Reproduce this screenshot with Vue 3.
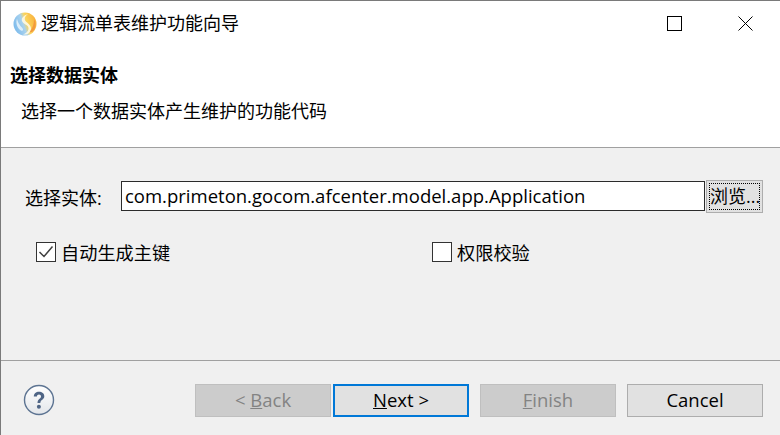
<script setup>
const autoKey = true
</script>

<template>
  <div class="window">
    <div class="titlebar">
      <svg class="logo" width="24" height="24" viewBox="0 0 24 24">
        <defs>
          <linearGradient id="lg" x1="0.05" y1="0.65" x2="0.95" y2="0.35">
            <stop offset="0" stop-color="#7fbcec" />
            <stop offset="0.42" stop-color="#a9d2ee" />
            <stop offset="0.6" stop-color="#fbd65f" />
            <stop offset="1" stop-color="#f9b43f" />
          </linearGradient>
        </defs>
        <circle cx="12" cy="12" r="11.5" fill="url(#lg)" />
        <path d="M15 2C10 3.500 7.500 7 9.500 10C11.500 12.800 16 13 15.500 17C15.200 19.500 13 21.500 10 22.500C14.500 23.200 18 20.500 18 16.500C18 12 12.500 10.800 11.800 7.500C11.400 5.500 12.800 3.300 15 2Z" fill="#fff9e6" opacity="0.9" />
        <path d="M4 6.500C2.500 11 4 16 8 18.500C9.800 19.500 10.800 18 9.500 16.300C7.500 13.800 5 11.500 4 6.500Z" fill="#e9f4fb" opacity="0.85" />
        <path d="M21.500 17.500C23 14.500 23 10 21 7C21.300 11 20 15.500 16.500 20.500C18.500 20.500 20.300 19.300 21.500 17.500Z" fill="#f29a3d" />
      </svg>
      <span class="title">逻辑流单表维护功能向导</span>
      <div class="controls">
        <svg width="15" height="15" viewBox="0 0 15 15">
          <rect x="0.5" y="0.5" width="14" height="14" fill="none" stroke="#000" />
        </svg>
        <svg width="15" height="15" viewBox="0 0 15 15">
          <path d="M0.500 0.500L14.500 14.500M14.500 0.500L0.500 14.500" fill="none" stroke="#000" stroke-width="1" />
        </svg>
      </div>
    </div>

    <div class="banner">
      <h1 class="heading">选择数据实体</h1>
      <p class="desc">选择一个数据实体产生维护的功能代码</p>
    </div>

    <div class="body">
      <div class="entity-row">
        <label class="entity-label">选择实体:</label>
        <div class="entity-input">com.primeton.gocom.afcenter.model.app.Application</div>
        <button class="browse"><span class="browse-focus">浏览...</span></button>
      </div>
      <div class="checks">
        <div class="check">
          <span class="box">
            <svg v-if="autoKey" width="18" height="18" viewBox="0 0 18 18">
              <path d="M2.500 9L7 13.500L15.500 3.500" fill="none" stroke="#404040" stroke-width="1.500" />
            </svg>
          </span>
          <span class="check-text">自动生成主键</span>
        </div>
        <div class="check">
          <span class="box"></span>
          <span class="check-text">权限校验</span>
        </div>
      </div>
    </div>

    <div class="footer">
      <svg class="help" width="32" height="32" viewBox="0 0 32 32">
        <defs>
          <linearGradient id="hg" x1="0" y1="0" x2="0" y2="1">
            <stop offset="0" stop-color="#ffffff" />
            <stop offset="1" stop-color="#e3e6ea" />
          </linearGradient>
        </defs>
        <circle cx="16" cy="16" r="14.500" fill="url(#hg)" stroke="#5d7492" stroke-width="1.400" />
        <path d="M10.800 12.500C10.800 9.500 13 7.800 16 7.800C19 7.800 21.300 9.500 21.300 12.200C21.300 15.800 17.300 15.500 17.300 19H14.500C14.500 14.700 18 14.800 18 12.400C18 11.100 17.200 10.400 16 10.400C14.700 10.400 14 11.300 13.900 12.500Z" fill="#4f6586" />
        <circle cx="15.900" cy="22.800" r="2" fill="#4f6586" />
      </svg>
      <div class="buttons">
        <button class="btn disabled">&lt; <u>B</u>ack</button>
        <button class="btn primary"><u>N</u>ext &gt;</button>
        <button class="btn disabled finish"><u>F</u>inish</button>
        <button class="btn cancel">Cancel</button>
      </div>
    </div>
  </div>
</template>

<style>
html, body {
  margin: 0;
  background: #f0f0f0;
}
</style>

<style scoped>
.window {
  width: 780px;
  height: 435px;
  box-sizing: border-box;
  display: flex;
  flex-direction: column;
  border-top: 1px solid #7a7a7a;
  border-left: 1px solid #7a7a7a;
  background: #f0f0f0;
  font-family: "Open Sans", "Noto Sans CJK SC", sans-serif;
  font-size: 18px;
  color: #000;
  overflow: hidden;
}
.titlebar {
  height: 46px;
  flex: none;
  display: flex;
  align-items: center;
  padding-left: 12px;
  background: #fff;
  box-sizing: border-box;
}
.logo {
  margin-right: 4px;
  margin-bottom: 1px;
}
.title {
  font-size: 18px;
  line-height: 24px;
  margin-bottom: 3px;
}
.controls {
  margin-left: auto;
  display: flex;
  align-items: center;
  gap: 56px;
  padding-right: 27px;
  margin-bottom: 1px;
}
.banner {
  height: 101px;
  flex: none;
  box-sizing: border-box;
  background: #fff;
  border-bottom: 1px solid #a0a0a0;
  padding-left: 9px;
}
.heading {
  margin: 0;
  font-size: 18px;
  line-height: 26px;
  font-weight: 700;
  padding-top: 15px;
}
.desc {
  margin: 0;
  padding-left: 11px;
  padding-top: 11px;
  line-height: 24px;
}
.body {
  flex: 1;
  box-sizing: border-box;
  border-bottom: 1px solid #a0a0a0;
  padding-top: 32px;
}
.entity-row {
  display: flex;
  align-items: center;
  padding-left: 24px;
  height: 33px;
}
.entity-label {
  width: 96px;
  flex: none;
}
.entity-input {
  width: 584px;
  height: 30px;
  margin-right: 1px;
  margin-bottom: 1px;
  flex: none;
  box-sizing: border-box;
  border: 1px solid #2b2b2b;
  background: #fff;
  padding-left: 3px;
  font-size: 18.5px;
  line-height: 28px;
  white-space: nowrap;
}
.browse {
  width: 57px;
  height: 33px;
  flex: none;
  padding: 2px;
  box-sizing: border-box;
  border: 1px solid #adadad;
  background: #e1e1e1;
  font: inherit;
  color: #000;
}
.browse-focus {
  display: block;
  height: 100%;
  box-sizing: border-box;
  border: 1px dotted #000;
  line-height: 24px;
  white-space: nowrap;
}
.checks {
  display: grid;
  grid-template-columns: 396px auto;
  padding-left: 35px;
  padding-top: 27px;
}
.check {
  display: flex;
  align-items: center;
  gap: 5px;
  height: 24px;
  line-height: 24px;
}
.check-text {
  padding-top: 2px;
  font-size: 18.2px;
}
.box {
  width: 20px;
  height: 20px;
  flex: none;
  box-sizing: border-box;
  border: 1px solid #333;
  background: #fff;
  display: flex;
  align-items: center;
  justify-content: center;
}
.footer {
  height: 74px;
  flex: none;
  display: flex;
  align-items: flex-start;
  box-sizing: border-box;
  padding-top: 23px;
  padding-left: 22px;
}
.help {
  flex: none;
}
.buttons {
  display: flex;
  margin-left: 140px;
}
.btn {
  width: 136px;
  height: 33px;
  margin-right: 2px;
  padding: 0 0 2px;
  box-sizing: border-box;
  border: 1px solid #adadad;
  background: #e1e1e1;
  font: inherit;
  font-size: 18.5px;
  color: #000;
}
.btn.disabled {
  background: #cccccc;
  border-color: #bfbfbf;
  color: #838383;
}
.btn.primary {
  border: 2px solid #0078d7;
  margin-right: 11px;
}
.btn.finish {
  margin-right: 11px;
}
.btn.cancel {
  margin-right: 0;
}
</style>
